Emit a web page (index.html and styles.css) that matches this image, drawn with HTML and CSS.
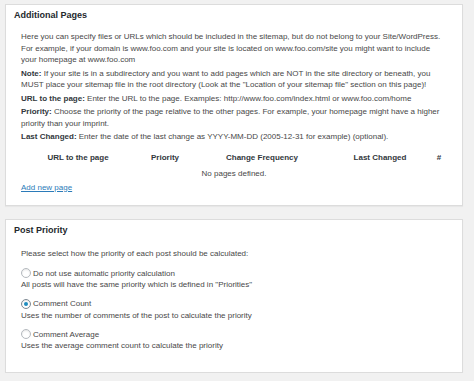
FILE: index.html
```html
<!DOCTYPE html>
<html>
<head>
<meta charset="utf-8">
<link rel="stylesheet" href="styles.css">
</head>
<body>
<div class="page">
  <div class="postbox box-pages">
    <h3 class="hndle">Additional Pages</h3>
    <div class="inside">
      <p>Here you can specify files or URLs which should be included in the sitemap, but do not belong to your Site/WordPress.<br>For example, if your domain is www.foo.com and your site is located on www.foo.com/site you might want to include your homepage at www.foo.com</p>
      <p><b>Note:</b> If your site is in a subdirectory and you want to add pages which are NOT in the site directory or beneath, you MUST place your sitemap file in the root directory (Look at the "Location of your sitemap file" section on this page)!</p>
      <p><b>URL to the page:</b> Enter the URL to the page. Examples: http://www.foo.com/index.html or www.foo.com/home</p>
      <p><b>Priority:</b> Choose the priority of the page relative to the other pages. For example, your homepage might have a higher priority than your imprint.</p>
      <p><b>Last Changed:</b> Enter the date of the last change as YYYY-MM-DD (2005-12-31 for example) (optional).</p>
      <table class="pages">
        <thead>
          <tr>
            <th class="c-url">URL to the page</th>
            <th class="c-prio">Priority</th>
            <th class="c-freq">Change Frequency</th>
            <th class="c-last">Last Changed</th>
            <th class="c-num">#</th>
          </tr>
        </thead>
        <tbody>
          <tr><td colspan="5" class="empty">No pages defined.</td></tr>
        </tbody>
      </table>
      <a class="addnew" href="#">Add new page</a>
    </div>
  </div>

  <div class="postbox box-prio">
    <h3 class="hndle">Post Priority</h3>
    <div class="inside">
      <p>Please select how the priority of each post should be calculated:</p>
      <div class="opt">
        <label class="radio"><span class="dot"></span>Do not use automatic priority calculation</label>
        <div class="desc">All posts will have the same priority which is defined in "Priorities"</div>
      </div>
      <div class="opt">
        <label class="radio"><span class="dot checked"></span>Comment Count</label>
        <div class="desc">Uses the number of comments of the post to calculate the priority</div>
      </div>
      <div class="opt">
        <label class="radio"><span class="dot"></span>Comment Average</label>
        <div class="desc">Uses the average comment count to calculate the priority</div>
      </div>
    </div>
  </div>
</div>
</body>
</html>
```
FILE: styles.css
```css
html, body {
  margin: 0;
  padding: 0;
  background: #f1f1f1;
}
body {
  font-family: "Liberation Sans", Arial, sans-serif;
  font-size: 8px;
  line-height: 11.5px;
  color: #484848;
}
.page {
  width: 458px;
  padding: 4px 0 0 5px;
  display: flex;
  flex-direction: column;
  gap: 13px;
}
.postbox {
  background: #fff;
  border: 1px solid #dcdcdc;
  box-shadow: 0 1px 1px rgba(0,0,0,0.04);
}
.box-pages { height: 200px; }
.box-prio { height: 152px; }
.hndle {
  margin: 0;
  font-size: 9px;
  font-weight: bold;
  color: #23282d;
  padding: 5px 8px 0;
  height: 18px;
  line-height: 11px;
}
.inside {
  padding: 3px 15px 0;
}
.inside p {
  margin: 0 0 2px;
}
.inside b {
  color: #32373c;
}
table.pages {
  width: 426px;
  border-collapse: collapse;
  margin-top: 8px;
}
table.pages th {
  font-weight: bold;
  color: #32373c;
  padding: 0;
  height: 14px;
  text-align: center;
}
.c-url { width: 114px; }
.c-prio { width: 60px; }
.c-freq { width: 134px; }
.c-last { width: 102px; }
.c-num { width: 16px; }
td.empty {
  text-align: center;
  padding: 2px 0 0;
  height: 14px;
}
.addnew {
  display: inline-block;
  margin-top: 1px;
  color: #2b7bb9;
  text-decoration: underline;
}
.box-prio .inside { padding-top: 5px; }
.box-prio .inside p { margin-bottom: 8px; }
.opt { margin-bottom: 7.5px; }
.radio {
  display: flex;
  align-items: center;
  gap: 2px;
}
.dot {
  width: 8px;
  height: 8px;
  border: 1px solid #b4b9be;
  border-radius: 50%;
  background: #fff;
  box-shadow: inset 0 1px 2px rgba(0,0,0,0.1);
  display: inline-flex;
  align-items: center;
  justify-content: center;
  flex: none;
}
.dot.checked {
  border-color: #7e8993;
}
.dot.checked::after {
  content: "";
  width: 4px;
  height: 4px;
  border-radius: 50%;
  background: #1e8cbe;
}
```
